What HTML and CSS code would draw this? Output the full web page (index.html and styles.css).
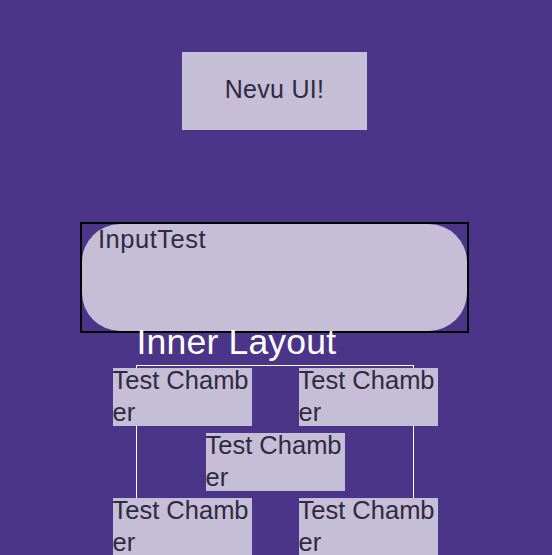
FILE: index.html
```html
<!DOCTYPE html>
<html>
<head>
<meta charset="utf-8">
<link rel="stylesheet" href="styles.css">
</head>
<body>
<div class="page">
  <div class="title-box">Nevu UI!</div>
  <div class="input-frame">
    <div class="input-field">InputTest</div>
  </div>
  <div class="inner">
    <div class="inner-label">Inner Layout</div>
    <div class="inner-frame">
      <div class="cells">
        <div class="row row-split">
          <div class="cell">Test Chamber</div>
          <div class="cell">Test Chamber</div>
        </div>
        <div class="row row-center">
          <div class="cell">Test Chamber</div>
        </div>
        <div class="row row-split">
          <div class="cell">Test Chamber</div>
          <div class="cell">Test Chamber</div>
        </div>
      </div>
    </div>
  </div>
</div>
</body>
</html>
```
FILE: styles.css
```css
html, body {
  margin: 0;
  padding: 0;
  height: 100%;
  overflow: hidden;
}
body {
  background: #4b3588;
  font-family: "Liberation Sans", Arial, sans-serif;
}
.page {
  display: flex;
  flex-direction: column;
  align-items: center;
  padding: 52px 3px 0 0;
}
.title-box {
  width: 185px;
  height: 78px;
  background: #c6bdd7;
  color: #2f2a40;
  font-size: 25px;
  letter-spacing: 0.3px;
  display: flex;
  align-items: center;
  justify-content: center;
  box-sizing: border-box;
  padding-bottom: 3px;
}
.input-frame {
  margin-top: 92px;
  width: 385px;
  height: 107px;
  border: 2px solid #000;
  display: flex;
}
.input-field {
  flex: 1;
  background: #c6bdd7;
  border-radius: 38px;
  color: #2f2a40;
  font-size: 25.5px;
  letter-spacing: 0.5px;
  line-height: 29px;
  padding: 1px 16px;
}
.inner {
  margin-top: -11px;
  width: 278px;
  display: flex;
  flex-direction: column;
}
.inner-label {
  color: #ffffff;
  font-size: 35.5px;
  letter-spacing: 0.2px;
  line-height: 40px;
  padding-left: 1px;
  margin-bottom: 3px;
}
.inner-frame {
  border: 1px solid #ffffff;
  border-bottom: none;
  height: 300px;
  padding-top: 2px;
}
.cells {
  margin: 0 -25px 0 -24px;
  display: flex;
  flex-direction: column;
  gap: 7px;
}
.row {
  display: flex;
}
.row-split {
  justify-content: space-between;
}
.row-center {
  justify-content: center;
}
.cell {
  width: 139px;
  height: 58px;
  box-sizing: border-box;
  padding-bottom: 3px;
  background: #c6bdd7;
  color: #2f2a40;
  font-size: 25.5px;
  line-height: 32px;
  word-break: break-all;
  display: flex;
  align-items: center;
}
```
